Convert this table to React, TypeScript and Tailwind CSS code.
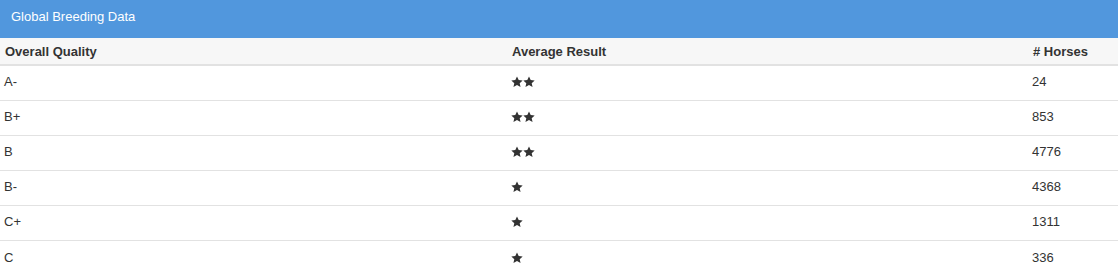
const rows = [
  { grade: "A-", stars: 2, horses: 24 },
  { grade: "B+", stars: 2, horses: 853 },
  { grade: "B", stars: 2, horses: 4776 },
  { grade: "B-", stars: 1, horses: 4368 },
  { grade: "C+", stars: 1, horses: 1311 },
  { grade: "C", stars: 1, horses: 336 },
];

const Star = () => (
  <svg viewBox="0 0 24 24" width={12} height={12} className="fill-[#333]">
    <path d="M12 0.8l3.4 7.2 7.9.9-5.9 5.4 1.7 7.9L12 18.2 4.9 22.2l1.7-7.9L0.7 8.9l7.9-.9z" />
  </svg>
);

const App: React.FC = () => {
  return (
    <div className="w-[1118px] bg-white text-[13px] text-[#333] font-['Liberation_Sans',Arial,sans-serif]">
      <div className="h-[38px] bg-[#5197dd] text-white flex items-center pl-[11px] pb-[5px]">
        Global Breeding Data
      </div>
      <div className="grid grid-cols-[507px_521px_1fr] h-[28px] items-center bg-[#f7f7f7] border-b-2 border-[#e2e2e2] font-bold">
        <div className="pl-[5px] pt-[1px]">Overall Quality</div>
        <div className="pl-[5px] pt-[1px]">Average Result</div>
        <div className="pl-[5px] pt-[1px]">#&nbsp;Horses</div>
      </div>
      {rows.map((r) => (
        <div
          key={r.grade}
          className="grid grid-cols-[507px_521px_1fr] h-[35px] items-center border-b border-[#e2e2e2] last:border-b-0 pb-[2px]"
        >
          <div className="pl-[4px]">{r.grade}</div>
          <div className="pl-[4px] flex">
            {Array.from({ length: r.stars }).map((_, i) => (
              <Star key={i} />
            ))}
          </div>
          <div className="pl-[4px]">{r.horses}</div>
        </div>
      ))}
    </div>
  );
};

export default App;
